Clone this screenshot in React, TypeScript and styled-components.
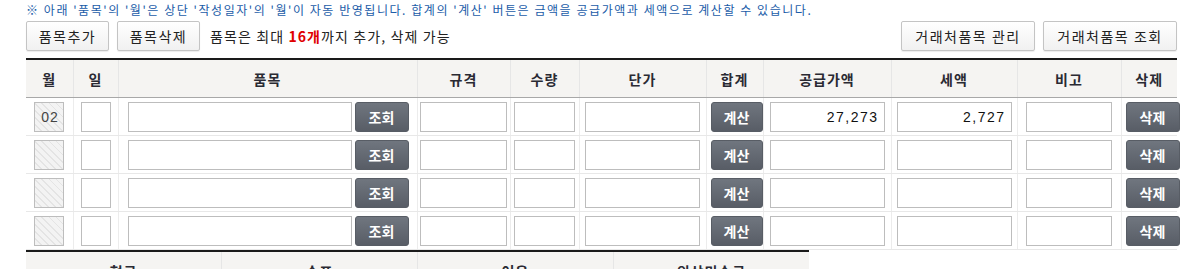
import styled, { createGlobalStyle } from "styled-components";

const GlobalStyle = createGlobalStyle`
  html, body {
    margin: 0;
    padding: 0;
    background: #fff;
  }
  body {
    font-family: "Noto Sans CJK KR", "Noto Sans", sans-serif;
    color: #222;
  }
`;

const Page = styled.div`
  width: 1151px;
  padding: 2px 26px 0 26px;
`;

const Notice = styled.p`
  margin: 0;
  font-size: 12px;
  line-height: 16px;
  letter-spacing: 1.55px;
  white-space: nowrap;
  color: #1a5ca8;
`;

const Toolbar = styled.div`
  display: flex;
  justify-content: space-between;
  align-items: center;
  margin-top: 3px;
`;

const Group = styled.div`
  display: flex;
  align-items: center;
  gap: 8px;
`;

const LightButton = styled.button<{ $w: number }>`
  width: ${(p) => p.$w}px;
  height: 30px;
  padding: 0;
  border: 1px solid #c4c4c4;
  border-radius: 2px;
  background: linear-gradient(#ffffff, #f1f1f1);
  box-shadow: 0 1px 1px rgba(0, 0, 0, 0.08);
  font-family: inherit;
  font-size: 14px;
  color: #222;
  letter-spacing: 1.5px;
  cursor: pointer;
`;

const Hint = styled.span`
  margin-left: 2px;
  font-size: 14px;
  letter-spacing: 1.1px;
  color: #222;
`;

const Red = styled.b`
  color: #e00000;
`;

const Table = styled.table<{ $w: number }>`
  width: ${(p) => p.$w}px;
  border-collapse: collapse;
  table-layout: fixed;
  border-top: 2px solid #1a1a1a;
`;

const ItemTable = styled(Table)`
  margin-top: 7px;
`;

const Th = styled.th`
  height: 37px;
  padding: 0;
  background: #f5f4f2;
  border-left: 1px solid #e6e6e6;
  border-bottom: 1px solid #a8a8a8;
  font-size: 14px;
  font-weight: bold;
  letter-spacing: 1px;
  color: #2a2a33;
  text-align: center;
  &:first-child {
    border-left: none;
  }
`;

const Td = styled.td`
  height: 37px;
  padding: 0;
  border-left: 1px solid #ececec;
  border-bottom: 1px solid #e8e8e8;
  text-align: center;
  vertical-align: middle;
  white-space: nowrap;
  overflow: visible;
  &:first-child {
    border-left: none;
  }
`;

const Field = styled.input<{ $w: number; $right?: boolean; $locked?: boolean }>`
  box-sizing: border-box;
  width: ${(p) => p.$w}px;
  height: 30px;
  margin: 0;
  padding: 0 5px;
  border: 1px solid #bdbdbd;
  border-radius: 0;
  vertical-align: middle;
  font-family: "Liberation Sans", sans-serif;
  font-size: 14px;
  letter-spacing: 1.5px;
  color: #111;
  text-align: ${(p) => (p.$right ? "right" : "left")};
  background: ${(p) =>
    p.$locked
      ? "repeating-linear-gradient(45deg, #f3f3f3 0 4px, #e4e4e4 4px 5px)"
      : "#fff"};
  outline: none;
`;

const MonthField = styled(Field)`
  color: #444;
  padding: 0 0 0 6px;
  letter-spacing: 1px;
`;

const DarkButton = styled.button<{ $w: number }>`
  width: ${(p) => p.$w}px;
  height: 30px;
  margin: 0;
  padding: 0;
  border: 1px solid #585d65;
  border-radius: 3px;
  background: linear-gradient(#70767f, #585d66);
  color: #fff;
  font-family: inherit;
  font-size: 14px;
  font-weight: bold;
  vertical-align: middle;
  cursor: pointer;
`;

const ItemCell = styled.div`
  display: flex;
  align-items: center;
  gap: 3px;
  padding-left: 9px;
`;

const RightShift = styled.div<{ $dx: number }>`
  padding-left: ${(p) => p.$dx}px;
  text-align: left;
`;

const columns: { label: string; w: number }[] = [
  { label: "월", w: 47 },
  { label: "일", w: 45 },
  { label: "품목", w: 299 },
  { label: "규격", w: 93 },
  { label: "수량", w: 69 },
  { label: "단가", w: 127 },
  { label: "합계", w: 57 },
  { label: "공급가액", w: 128 },
  { label: "세액", w: 126 },
  { label: "비고", w: 104 },
  { label: "삭제", w: 56 },
];

const rows = [
  { month: "02", supply: "27,273", tax: "2,727" },
  { month: "", supply: "", tax: "" },
  { month: "", supply: "", tax: "" },
  { month: "", supply: "", tax: "" },
];

const payments = ["현금", "수표", "어음", "외상미수금"];

const App = () => {
  return (
    <Page>
      <GlobalStyle />
      <Notice>
        ※ 아래 '품목'의 '월'은 상단 '작성일자'의 '월'이 자동 반영됩니다. 합계의 '계산' 버튼은 금액을 공급가액과 세액으로 계산할 수 있습니다.
      </Notice>
      <Toolbar>
        <Group>
          <LightButton $w={83}>품목추가</LightButton>
          <LightButton $w={83}>품목삭제</LightButton>
          <Hint>
            품목은 최대 <Red>16개</Red>까지 추가, 삭제 가능
          </Hint>
        </Group>
        <Group>
          <LightButton $w={134}>거래처품목 관리</LightButton>
          <LightButton $w={134}>거래처품목 조회</LightButton>
        </Group>
      </Toolbar>

      <ItemTable $w={1151}>
        <colgroup>
          {columns.map((c) => (
            <col key={c.label} style={{ width: c.w }} />
          ))}
        </colgroup>
        <thead>
          <tr>
            {columns.map((c) => (
              <Th key={c.label}>{c.label}</Th>
            ))}
          </tr>
        </thead>
        <tbody>
          {rows.map((r, i) => (
            <tr key={i}>
              <Td>
                <MonthField $w={30} $locked readOnly defaultValue={r.month} />
              </Td>
              <Td>
                <Field $w={30} />
              </Td>
              <Td>
                <ItemCell>
                  <Field $w={224} />
                  <DarkButton $w={54}>조회</DarkButton>
                </ItemCell>
              </Td>
              <Td>
                <Field $w={87} />
              </Td>
              <Td>
                <Field $w={61} />
              </Td>
              <Td>
                <Field $w={115} />
              </Td>
              <Td>
                <RightShift $dx={4}>
                  <DarkButton $w={52}>계산</DarkButton>
                </RightShift>
              </Td>
              <Td>
                <Field $w={115} $right defaultValue={r.supply} />
              </Td>
              <Td>
                <Field $w={115} $right defaultValue={r.tax} />
              </Td>
              <Td>
                <Field $w={86} />
              </Td>
              <Td>
                <RightShift $dx={4}>
                  <DarkButton $w={54}>삭제</DarkButton>
                </RightShift>
              </Td>
            </tr>
          ))}
        </tbody>
      </ItemTable>

      <Table $w={783}>
        <thead>
          <tr>
            {payments.map((p) => (
              <Th key={p}>{p}</Th>
            ))}
          </tr>
        </thead>
      </Table>
    </Page>
  );
};

export default App;
